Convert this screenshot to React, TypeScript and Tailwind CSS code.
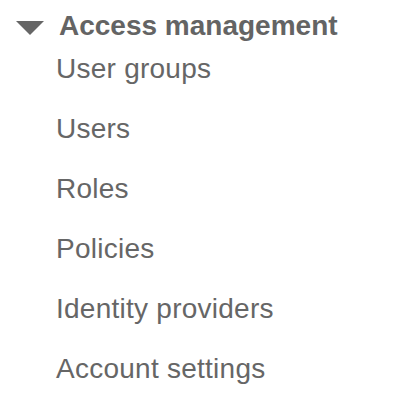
import React from "react";

const items = [
  "User groups",
  "Users",
  "Roles",
  "Policies",
  "Identity providers",
  "Account settings",
];

export default function App() {
  return (
    <div
      className="w-[420px] h-[412px] bg-white text-[#666666] overflow-hidden"
      style={{ fontFamily: '"Liberation Sans", Arial, sans-serif' }}
    >
      <div className="pt-[10px]">
        <div className="flex items-center h-[32px]">
          <svg
            width="28"
            height="14"
            viewBox="0 0 28 14"
            className="ml-[16px] mt-[4px] shrink-0"
          >
            <polygon points="0,0 28,0 14,14" fill="#666666" />
          </svg>
          <span className="ml-[15px] text-[28px] leading-[32px] font-bold text-[#646464]">
            Access management
          </span>
        </div>
        <ul className="mt-[11px] flex flex-col gap-[28px] pl-[56px]">
          {items.map((t) => (
            <li key={t} className="text-[28px] leading-[32px] tracking-[0.25px]">
              {t}
            </li>
          ))}
        </ul>
      </div>
    </div>
  );
}
